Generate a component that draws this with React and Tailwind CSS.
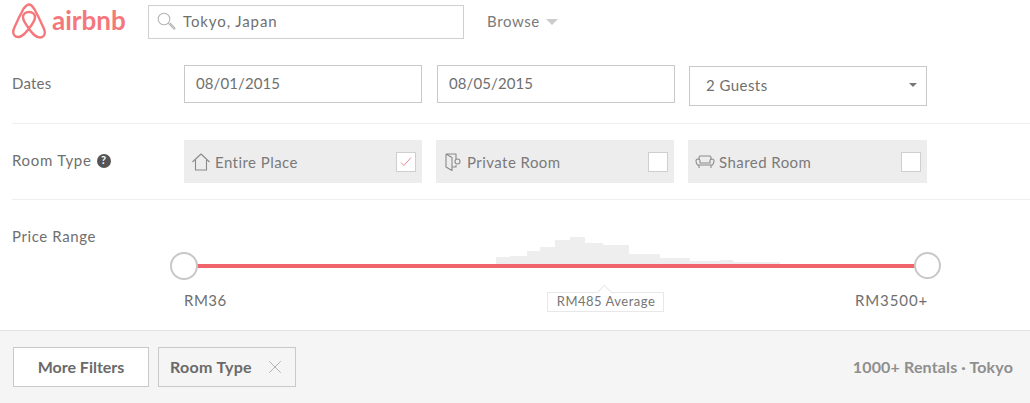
import React from "react";
import { X } from "lucide-react";

const LogoMark = () => (
  <svg width="34" height="36" viewBox="0 0 34 36" fill="none" stroke="#f4777c" strokeWidth="2.4" strokeLinejoin="round" strokeLinecap="round">
    <path d="M17 25.5C13.5 21 11 17 11 14.2c0-3.3 2.6-5.2 6-5.2s6 1.900 6 5.200c0 2.800-2.500 6.800-6 11.300Zm0 0c-3.300 4.200-6.500 8.500-11 8.500-3 0-4.800-2.400-4.800-5 0-1.500.5-3 1.300-4.700 2-4.500 6-13 9-18.500C13.400 3.300 14.800 1.500 17 1.500s3.600 1.800 5.500 4.800c3 5.500 7 14 9 18.500.8 1.700 1.300 3.200 1.300 4.700 0 2.600-1.800 5-4.800 5-4.500 0-7.700-4.300-11-8.500Z" />
  </svg>
);

const SearchIcon = () => (
  <svg width="20" height="20" viewBox="0 0 20 20" fill="none" stroke="#b5b5b5" strokeWidth="1.100">
    <circle cx="7" cy="7" r="5.800" />
    <path d="M11.200 11.200l6 6.200M13 11l5.200 5.400M17.200 17.400l1-1" />
  </svg>
);

const HomeIcon = () => (
  <svg width="20" height="20" viewBox="0 0 20 20" fill="none" stroke="#8a8a8a" strokeWidth="1.100" strokeLinejoin="round">
    <path d="M1.500 10L10 2l8.500 8M4.500 8v10h11V8" />
  </svg>
);

const DoorIcon = () => (
  <svg width="20" height="20" viewBox="0 0 20 20" fill="none" stroke="#8a8a8a" strokeWidth="1.100" strokeLinejoin="round">
    <path d="M3 2h10v5M3 2v13l6 3.500V5.500L3 2M9 15h4v-2" />
    <circle cx="14.500" cy="9.500" r="2.500" />
  </svg>
);

const SofaIcon = () => (
  <svg width="20" height="20" viewBox="0 0 20 20" fill="none" stroke="#8a8a8a" strokeWidth="1.100" strokeLinejoin="round">
    <path d="M4 8V5.500C4 4.500 4.800 4 5.500 4h9c.8 0 1.500.5 1.500 1.500V8" />
    <path d="M1 8.500C1 7.500 2 7 3 7s2 .5 2 1.500V11h10V8.500c0-1 1-1.500 2-1.500s2 .5 2 1.500c0 1-.5 3.500-1.500 4.500h-15C1.500 12 1 9.500 1 8.500ZM4 13.500V16M16 13.500V16" />
  </svg>
);

const CheckMark = () => (
  <svg width="12" height="10" viewBox="0 0 12 10" fill="none" stroke="#e88a93" strokeWidth="1">
    <path d="M1 5.500L4 8.500l7-8" />
  </svg>
);

const Histogram = () => (
  <svg width="300" height="30" viewBox="0 0 300 30" className="absolute left-[496px] top-[236px]">
    <path d="M0 30V21H14V20H31V15H44V11H59V4H74V1H89V7H107V9H133V18H164V22H194V25H224V24H237V26H284V30Z" fill="#efeeee" />
  </svg>
);

const Field = ({ children, className }) => (
  <div className={`h-[38px] w-[238px] border border-[#c9c9c9] bg-white pl-[11px] pb-[2px] flex items-center text-[15px] text-[#6f6f6f] tracking-[0.1px] ${className || ""}`}>
    {children}
  </div>
);

const RoomOption = ({ icon, label, checked, width }) => (
  <div className={`h-[43px] ${width} bg-[#ededed] flex items-center pl-[7px] pr-[6px] text-[15px] text-[#7a7a7a] tracking-[0.45px]`}>
    {icon}
    <span className="ml-[4px] flex-1 pt-[2px]">{label}</span>
    <span className="w-[20px] h-[20px] bg-white border border-[#cfcfcf] flex items-center justify-center">
      {checked && <CheckMark />}
    </span>
  </div>
);

const App = () => {
  return (
    <div className="relative w-[1030px] h-[403px] overflow-hidden bg-white" style={{ fontFamily: "Lato, 'Noto Sans', sans-serif" }}>
      {/* Header */}
      <div className="h-[65px] flex items-start pl-[12px]">
        <div className="flex items-center pt-[3px]">
          <LogoMark />
          <span className="ml-[6px] text-[26px] leading-[34px] font-bold text-[#f4777c] w-[61px] -mt-[3px] whitespace-nowrap">airbnb</span>
        </div>
        <div className="ml-[35px] mt-[5px] h-[34px] w-[316px] border border-[#cfcfcf] flex items-center pl-[8px] pb-[1px] text-[15px] text-[#6f6f6f] tracking-[0.9px]">
          <SearchIcon />
          <span className="ml-[6px]">Tokyo, Japan</span>
        </div>
        <div className="ml-[23px] mt-[5px] h-[34px] pb-[1px] flex items-center text-[15px] text-[#7a7a7a] tracking-[0.6px]">
          Browse
          <span className="ml-[6px] mt-[1px] w-0 h-0 border-x-[6px] border-x-transparent border-t-[6px] border-t-[#cccccc]" />
        </div>
      </div>

      {/* Dates */}
      <div className="h-[58px] flex items-start pl-[12px]">
        <span className="w-[172px] text-[15px] leading-[36px] text-[#6f6f6f] tracking-[0.2px]">Dates</span>
        <Field>08/01/2015</Field>
        <Field className="ml-[15px]">08/05/2015</Field>
        <div className="ml-[14px] mt-[1px] h-[40px] w-[238px] border border-[#c9c9c9] flex items-center pl-[16px] pr-[9px] text-[15px] text-[#6f6f6f] tracking-[0.45px] justify-between">
          <span className="-mt-[2px]">2 Guests</span>
          <span className="w-0 h-0 -mt-[3px] border-x-[4px] border-x-transparent border-t-[4px] border-t-[#777777]" />
        </div>
      </div>

      <div className="ml-[12px] h-px bg-[#efefef]" />

      {/* Room Type */}
      <div className="h-[75px] pt-[16px] pl-[12px] flex items-start">
        <div className="w-[172px] h-[43px] flex items-center -mt-[1px] text-[15px] text-[#6f6f6f] tracking-[0.7px]">
          Room Type
          <span className="ml-[5px] w-[14px] h-[14px] rounded-full bg-[#555555] text-white text-[11px] font-bold flex items-center justify-center tracking-normal">?</span>
        </div>
        <RoomOption icon={<HomeIcon />} label="Entire Place" checked width="w-[238px]" />
        <div className="w-[14px]" />
        <RoomOption icon={<DoorIcon />} label="Private Room" width="w-[238px]" />
        <div className="w-[14px]" />
        <RoomOption icon={<SofaIcon />} label="Shared Room" width="w-[239px]" />
      </div>

      <div className="ml-[12px] h-px bg-[#efefef]" />

      {/* Price Range */}
      <div className="h-[130px] pl-[12px] pt-[26px] text-[15px] text-[#6f6f6f] tracking-[0.6px] leading-[20px]">
        Price Range
      </div>
      <Histogram />
      <div className="absolute left-[184px] top-[264px] w-[744px] h-[4px] bg-[#f0656c]" />
      <div className="absolute left-[170px] top-[252px] w-[28px] h-[28px] rounded-full bg-white border-2 border-[#c8c8c8]" />
      <div className="absolute left-[914px] top-[252px] w-[27px] h-[27px] rounded-full bg-white border-2 border-[#c8c8c8]" />
      <span className="absolute left-[184px] top-[290px] text-[15px] leading-[20px] text-[#6f6f6f] tracking-[0.5px]">RM36</span>
      <span className="absolute left-[855px] top-[290px] text-[15px] leading-[20px] text-[#6f6f6f] tracking-[0.9px]">RM3500+</span>
      <div className="absolute left-[547px] top-[292px] w-[117px] h-[20px] bg-white border border-[#e8e8e8] pl-[1px] flex items-center justify-center text-[13px] text-[#767676] tracking-[0.5px]">
        <span className="absolute left-[51px] -top-[6px] w-[11px] h-[11px] rotate-45 bg-white border-l border-t border-[#e8e8e8]" />
        <span className="relative">RM485 Average</span>
      </div>

      {/* Footer */}
      <div className="h-[73px] bg-[#f5f5f5] border-t border-[#e2e2e2] flex items-center pl-[13px] pr-[17px]">
        <button className="w-[136px] h-[40px] bg-white border border-[#c9c9c9] text-[16px] font-bold text-[#6a6a6a]">More Filters</button>
        <div className="ml-[9px] w-[138px] h-[40px] border border-[#c9c9c9] flex items-center pl-[11px] text-[16px] font-bold text-[#6a6a6a] tracking-[0.3px]">
          Room Type
          <X size={22} strokeWidth={0.8} color="#9a9a9a" className="ml-[12px]" />
        </div>
        <span className="ml-auto text-[16px] font-bold text-[#8e8e8e] tracking-[0.15px]">1000+ Rentals · Tokyo</span>
      </div>
    </div>
  );
};

export default App;
